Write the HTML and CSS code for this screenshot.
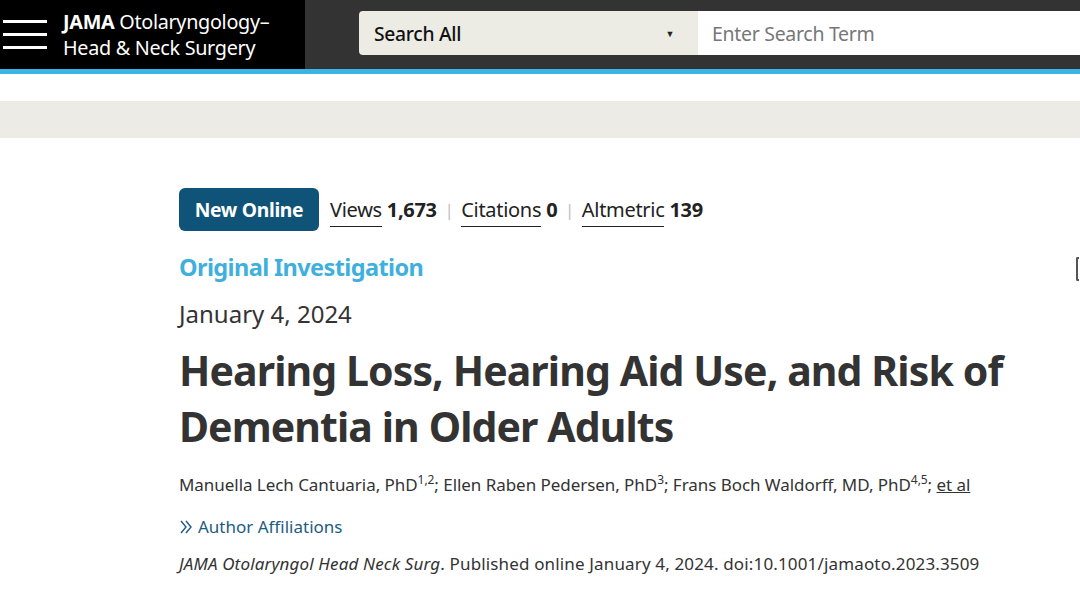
FILE: index.html
```html
<!DOCTYPE html>
<html>
<head>
<meta charset="utf-8">
<link rel="stylesheet" href="styles.css">
</head>
<body>
<header class="topbar">
  <div class="brand">
    <div class="hamburger"><span></span><span></span><span></span></div>
    <div class="journal"><b>JAMA</b> Otolaryngology–<br>Head &amp; Neck Surgery</div>
  </div>
  <div class="searchzone">
    <div class="search">
      <div class="scope"><span>Search All</span><span class="caret">▼</span></div>
      <div class="input">Enter Search Term</div>
    </div>
  </div>
</header>
<div class="stripe"></div>
<div class="spacer"></div>
<div class="band"></div>
<main class="article">
  <div class="metrics">
    <span class="badge">New Online</span>
    <span class="metric"><span class="ul">Views</span> <b>1,673</b></span>
    <span class="sep">|</span>
    <span class="metric"><span class="ul">Citations</span> <b>0</b></span>
    <span class="sep">|</span>
    <span class="metric"><span class="ul">Altmetric</span> <b>139</b></span>
  </div>
  <div class="type">Original Investigation</div>
  <div class="date">January 4, 2024</div>
  <h1 class="title">Hearing Loss, Hearing Aid Use, and Risk of Dementia in Older Adults</h1>
  <div class="authors">Manuella Lech Cantuaria, PhD<sup>1,2</sup>; Ellen Raben Pedersen, PhD<sup>3</sup>; Frans Boch Waldorff, MD, PhD<sup>4,5</sup>; <span class="etal">et al</span></div>
  <div class="affil"><svg class="chev" width="14" height="16" viewBox="0 0 14 16"><path d="M2 2 L7 8 L2 14 M7 2 L12 8 L7 14" fill="none" stroke="#1d5c82" stroke-width="1.4"/></svg>Author Affiliations</div>
  <div class="cite"><i>JAMA Otolaryngol Head Neck Surg</i>. Published online January 4, 2024. doi:10.1001/jamaoto.2023.3509</div>
  <div class="edge"></div>
</main>
</body>
</html>
```
FILE: styles.css
```css
* { box-sizing: border-box; }
html, body { margin: 0; padding: 0; background: #fff; }
body { font-family: "Noto Sans", "Open Sans", sans-serif; color: #333; width: 1080px; overflow: hidden; }

.topbar { display: flex; height: 69px; background: #333; }
.brand { width: 305px; background: #000; display: flex; align-items: center; color: #fff; }
.hamburger { width: 44px; margin-left: 3px; display: flex; flex-direction: column; gap: 10px; }
.hamburger span { display: block; height: 3px; background: #fff; }
.journal { margin-left: 16px; font-size: 19.8px; line-height: 26px; letter-spacing: -0.3px; }
.journal b { font-weight: 700; }

.searchzone { flex: 1; padding-top: 11px; padding-left: 54px; }
.search { display: flex; height: 44px; }
.scope { width: 339px; background: #ecebe4; border-radius: 4px 0 0 4px; display: flex; align-items: center; justify-content: space-between; padding: 0 24px 0 15px; font-size: 19.3px; color: #111; font-weight: 500; letter-spacing: -0.3px; }
.caret { font-size: 9px; color: #222; }
.input { flex: 1; background: #fff; display: flex; align-items: center; padding-left: 14px; font-size: 19.5px; color: #777; letter-spacing: -0.3px; }

.stripe { height: 5px; background: #3bb4e5; }
.spacer { height: 27px; }
.band { height: 37px; background: #ecebe5; }

.article { position: relative; padding: 50px 0 0 179px; }
.metrics { display: flex; align-items: center; height: 43px; font-size: 20px; letter-spacing: -0.3px; }
.badge { background: #0f5478; color: #fff; font-weight: 700; height: 43px; width: 140px; border-radius: 6px; display: flex; align-items: center; justify-content: center; margin-right: 11px; font-size: 19.3px; }
.metric { color: #222; }
.metric b { font-weight: 700; }
.ul { border-bottom: 1px solid #222; padding-bottom: 3px; }
.sep { color: #bbb; margin: 0 8px; font-size: 16px; }

.type { margin-top: 20px; font-size: 23.5px; font-weight: 700; color: #3fb0de; letter-spacing: -0.6px; line-height: 32px; }
.date { margin-top: 15px; font-size: 24px; line-height: 32px; color: #333; letter-spacing: 0; }
.title { margin: 12px 0 0; font-size: 41px; line-height: 56px; font-weight: 700; color: #333; width: 860px; letter-spacing: -0.9px; }
.authors { margin-top: 19px; font-size: 17px; line-height: 24px; color: #333; letter-spacing: -0.05px; }
.authors sup { font-size: 12px; line-height: 0; }
.etal { text-decoration: underline; }
.affil { margin-top: 18px; font-size: 17px; line-height: 24px; color: #1d5c82; letter-spacing: 0; display: flex; align-items: center; gap: 5px; }
.chev { flex: none; }
.cite { margin-top: 13px; font-size: 17px; line-height: 24px; color: #333; letter-spacing: 0.15px; }
.edge { position: absolute; right: 1px; top: 119px; width: 3px; height: 24px; border: 2px solid #555; border-right: none; border-radius: 2px 0 0 2px; }
```
